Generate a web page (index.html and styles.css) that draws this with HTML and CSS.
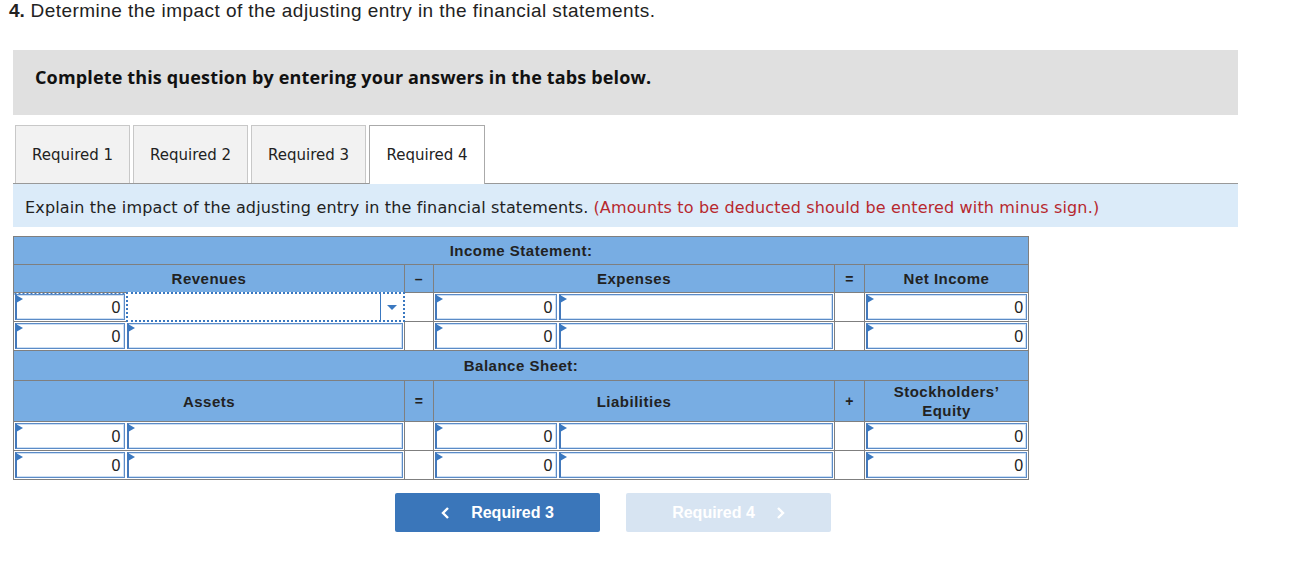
FILE: index.html
```html
<!DOCTYPE html>
<html>
<head>
<meta charset="utf-8">
<link rel="stylesheet" href="styles.css">
</head>
<body>
<div class="page">
  <h1 class="title"><b>4.</b> Determine the impact of the adjusting entry in the financial statements.</h1>
  <div class="wrap">
    <div class="notice">Complete this question by entering your answers in the tabs below.</div>
    <div class="tabs">
      <div class="tab">Required 1</div>
      <div class="tab">Required 2</div>
      <div class="tab">Required 3</div>
      <div class="tab active">Required 4</div>
    </div>
    <div class="instr">Explain the impact of the adjusting entry in the financial statements. <span class="red">(Amounts to be deducted should be entered with minus sign.)</span></div>

    <table class="fs">
      <colgroup>
        <col class="c-num1"><col class="c-txt1"><col class="c-op"><col class="c-num2"><col class="c-txt2"><col class="c-op2"><col class="c-res">
      </colgroup>
      <tr class="sec"><th colspan="7">Income Statement:</th></tr>
      <tr class="hd">
        <th colspan="2">Revenues</th><th class="op">–</th><th colspan="2">Expenses</th><th class="op">=</th><th>Net Income</th>
      </tr>
      <tr class="dr">
        <td class="in focus-top"><div class="box num"><i class="flag"></i>0</div></td>
        <td class="in"><div class="box sel focus"><span class="arrow"></span></div></td>
        <td class="opc"></td>
        <td class="in"><div class="box num"><i class="flag"></i>0</div></td>
        <td class="in"><div class="box"><i class="flag"></i></div></td>
        <td class="opc"></td>
        <td class="in"><div class="box num"><i class="flag"></i>0</div></td>
      </tr>
      <tr class="dr">
        <td class="in"><div class="box num"><i class="flag"></i>0</div></td>
        <td class="in"><div class="box"><i class="flag"></i></div></td>
        <td class="opc"></td>
        <td class="in"><div class="box num"><i class="flag"></i>0</div></td>
        <td class="in"><div class="box"><i class="flag"></i></div></td>
        <td class="opc"></td>
        <td class="in"><div class="box num"><i class="flag"></i>0</div></td>
      </tr>
      <tr class="sec sec2"><th colspan="7">Balance Sheet:</th></tr>
      <tr class="hd hd2">
        <th colspan="2">Assets</th><th class="op">=</th><th colspan="2">Liabilities</th><th class="op">+</th><th>Stockholders’<br>Equity</th>
      </tr>
      <tr class="dr">
        <td class="in"><div class="box num"><i class="flag"></i>0</div></td>
        <td class="in"><div class="box"><i class="flag"></i></div></td>
        <td class="opc"></td>
        <td class="in"><div class="box num"><i class="flag"></i>0</div></td>
        <td class="in"><div class="box"><i class="flag"></i></div></td>
        <td class="opc"></td>
        <td class="in"><div class="box num"><i class="flag"></i>0</div></td>
      </tr>
      <tr class="dr">
        <td class="in"><div class="box num"><i class="flag"></i>0</div></td>
        <td class="in"><div class="box"><i class="flag"></i></div></td>
        <td class="opc"></td>
        <td class="in"><div class="box num"><i class="flag"></i>0</div></td>
        <td class="in"><div class="box"><i class="flag"></i></div></td>
        <td class="opc"></td>
        <td class="in"><div class="box num"><i class="flag"></i>0</div></td>
      </tr>
    </table>

    <div class="nav">
      <div class="btn prev">
        <svg class="chev" width="10" height="14" viewBox="0 0 10 14"><polyline points="7,2 2,7 7,12" fill="none" stroke="#fff" stroke-width="2.4"/></svg>
        <span>Required 3</span>
      </div>
      <div class="btn next">
        <span>Required 4</span>
        <svg class="chev" width="10" height="14" viewBox="0 0 10 14"><polyline points="3,2 8,7 3,12" fill="none" stroke="#fff" stroke-width="2.4"/></svg>
      </div>
    </div>
  </div>
</div>
</body>
</html>
```

FILE: styles.css
```css
html, body { margin: 0; padding: 0; background: #fff; }
body { font-family: "Liberation Sans", Arial, sans-serif; color: #222; }
.page { width: 1293px; }
.title {
  margin: 0;
  padding: 0 0 0 9px;
  font-size: 19px;
  letter-spacing: 0.45px;
  font-weight: normal;
  line-height: 22px;
  color: #222;
}
.title b { font-weight: bold; letter-spacing: 0; }
.wrap { padding: 28px 55px 0 13px; }
.notice {
  box-sizing: border-box;
  background: #e0e0e0;
  height: 65px;
  padding: 15px 0 0 22px;
  line-height: 24px;
  font-family: "Open Sans", sans-serif;
  font-weight: bold;
  font-size: 18px;
  letter-spacing: 0.15px;
  color: #111;
}
.tabs {
  display: flex;
  gap: 3px;
  margin-top: 10px;
  padding-left: 2px;
  border-bottom: 1px solid #999;
  height: 58px;
}
.tab {
  box-sizing: border-box;
  width: 115px;
  height: 58px;
  background: #f2f2f2;
  border: 1px solid #c8c8c8;
  border-bottom: none;
  display: flex;
  align-items: center;
  justify-content: center;
  font-family: "DejaVu Sans", Verdana, sans-serif;
  font-size: 15px;
  color: #222;
}
.tab.active {
  background: #fff;
  border-color: #aaa;
  width: 116px;
  height: 59px;
  position: relative;
  z-index: 1;
}
.instr {
  box-sizing: border-box;
  background: #dbebf9;
  height: 43px;
  padding: 3px 0 0 12px;
  display: flex;
  align-items: center;
  font-family: "DejaVu Sans", Verdana, sans-serif;
  font-size: 16px;
  letter-spacing: 0.15px;
  color: #222;
  white-space: nowrap;
}
.red { color: #b7282e; margin-left: 5px; }

.fs {
  margin-top: 9px;
  border-collapse: collapse;
  table-layout: fixed;
  width: 1015px;
  border: 1px solid #7f7f7f;
}
.c-num1 { width: 112px; }
.c-txt1 { width: 279px; }
.c-op { width: 29px; }
.c-num2 { width: 124px; }
.c-txt2 { width: 277px; }
.c-op2 { width: 30px; }
.c-res { width: 164px; }

.fs th {
  background: #78ade3;
  border: 1px solid #7f7f7f;
  font-size: 15px;
  letter-spacing: 0.5px;
  font-weight: bold;
  color: #222;
  padding: 0;
  text-align: center;
}
.sec th { height: 27px; border-bottom: 1px solid #7f7f7f; }
.sec2 th { height: 29px; }
.hd th { height: 27px; }
.hd2 th { height: 40px; line-height: 19px; }
.fs th.op { font-size: 14px; }

.fs td {
  padding: 1px;
  border: 1px solid #7f7f7f;
  background: #fff;
  height: 26px;
}
.fs td.in { border-left: none; border-right: none; padding: 1px; }
.fs td.opc { background: #fff; }

.box {
  box-sizing: border-box;
  position: relative;
  height: 26px;
  border: 1px solid #5b8bc7;
  border-left: 2px solid #4479bb;
  box-shadow: inset 0 1px 0 #cddff3, inset 0 -1px 0 #cddff3, inset -1px 0 0 #cddff3;
  background: #fff;
}
.box.num {
  text-align: right;
  padding-right: 3px;
  font-size: 16px;
  line-height: 25px;
  color: #222;
}
.flag {
  position: absolute;
  left: -1px;
  top: 0;
  width: 0;
  height: 0;
  border-top: 4px solid transparent;
  border-bottom: 4px solid transparent;
  border-left: 7px solid #3a78c0;
}
.fs td.focus-top {
  background-color: #fff;
  background-image: linear-gradient(90deg, #3a78c0 50%, transparent 50%);
  background-size: 4px 2px;
  background-repeat: repeat-x;
  background-position: 0 0;
}
.box.sel.focus {
  border: 2px dotted #3a78c0;
  box-shadow: none;
  height: 30px;
  margin: -2px -2px -2px -1px;
}
.box.sel.focus::before {
  content: "";
  position: absolute;
  right: 22px;
  top: 0;
  bottom: 0;
  border-left: 1px solid #3a78c0;
}
.arrow {
  position: absolute;
  right: 6px;
  top: 11px;
  width: 0;
  height: 0;
  border-left: 5px solid transparent;
  border-right: 5px solid transparent;
  border-top: 5px solid #3a78c0;
}

.nav {
  display: flex;
  gap: 26px;
  margin-top: 13px;
  padding-left: 382px;
}
.btn {
  box-sizing: border-box;
  width: 205px;
  height: 39px;
  border-radius: 2px;
  display: flex;
  align-items: center;
  justify-content: center;
  gap: 20px;
  color: #fff;
  font-weight: bold;
  font-size: 16px;
}
.btn.prev { background: #3a76ba; }
.btn.next { background: #d7e4f2; }
.chev { display: block; }
```
